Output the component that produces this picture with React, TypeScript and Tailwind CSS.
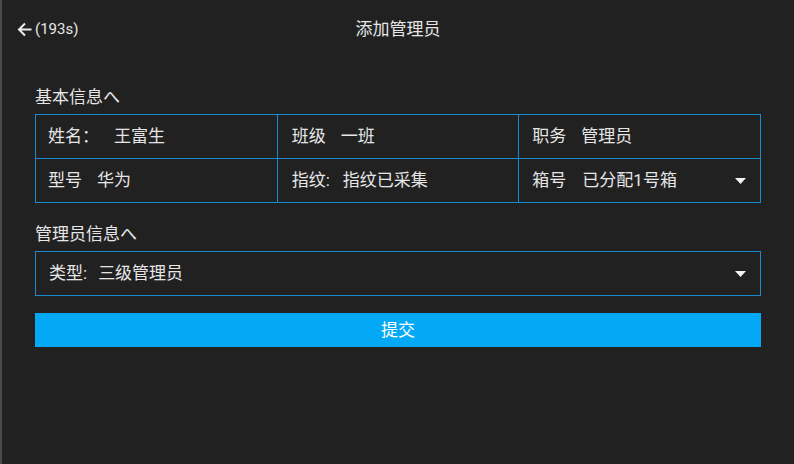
import React from "react";

const Caret = () => (
  <svg width="11" height="6" viewBox="0 0 11 6" className="block">
    <path d="M0 0 L11 0 L5.5 6 Z" fill="#f2f2f2" />
  </svg>
);

export default function App() {
  const font = { fontFamily: "Roboto, 'Noto Sans CJK SC', sans-serif" };
  return (
    <div
      className="w-[794px] h-[464px] bg-[#212121] text-[#e6e6e6] border-l-2 border-[#4a4a4a] overflow-hidden"
      style={font}
    >
      <div className="relative h-[58px] flex items-center justify-center">
        <div className="absolute left-[15px] top-0 h-full flex items-center gap-[3px]">
          <svg width="15" height="15" viewBox="0 0 15 15">
            <path d="M14.5 7.5 H2 M8 1.5 L2 7.5 L8 13.5" stroke="#ececec" strokeWidth="2" fill="none" />
          </svg>
          <span className="text-[15px] leading-none">(193s)</span>
        </div>
        <span className="text-[17px] leading-none">添加管理员</span>
      </div>

      <div className="pl-[33px] pr-[33px] pt-[27px]">
        <div className="h-[24px] flex items-center text-[17px] leading-none">基本信息へ</div>
        <div className="mt-[5px] grid grid-cols-3 border-t border-l border-[#1b8bd0] text-[17px] leading-none">
          <div className="h-[44px] border-r border-b border-[#1b8bd0] flex items-center pl-[12px]">
            <span>姓名：</span>
            <span className="ml-[15px]">王富生</span>
          </div>
          <div className="h-[44px] border-r border-b border-[#1b8bd0] flex items-center pl-[14px]">
            <span>班级</span>
            <span className="ml-[15px]">一班</span>
          </div>
          <div className="h-[44px] border-r border-b border-[#1b8bd0] flex items-center pl-[13px]">
            <span>职务</span>
            <span className="ml-[15px]">管理员</span>
          </div>
          <div className="h-[44px] border-r border-b border-[#1b8bd0] flex items-center pl-[12px]">
            <span>型号</span>
            <span className="ml-[15px]">华为</span>
          </div>
          <div className="h-[44px] border-r border-b border-[#1b8bd0] flex items-center pl-[14px]">
            <span>指纹:</span>
            <span className="ml-[13px]">指纹已采集</span>
          </div>
          <div className="h-[44px] border-r border-b border-[#1b8bd0] flex items-center pl-[13px] pr-[14px]">
            <span>箱号</span>
            <span className="ml-[16px]">已分配1号箱</span>
            <span className="ml-auto">
              <Caret />
            </span>
          </div>
        </div>

        <div className="mt-[19px] h-[24px] flex items-center text-[17px] leading-none">管理员信息へ</div>
        <div className="mt-[5px] h-[45px] border border-[#1b8bd0] flex items-center pl-[13px] pr-[14px] text-[17px] leading-none">
          <span>类型:</span>
          <span className="ml-[11px]">三级管理员</span>
          <span className="ml-auto">
            <Caret />
          </span>
        </div>

        <button className="mt-[17px] w-full h-[34px] bg-[#03a9f4] text-white text-[17px] leading-none flex items-center justify-center">
          提交
        </button>
      </div>
    </div>
  );
}
